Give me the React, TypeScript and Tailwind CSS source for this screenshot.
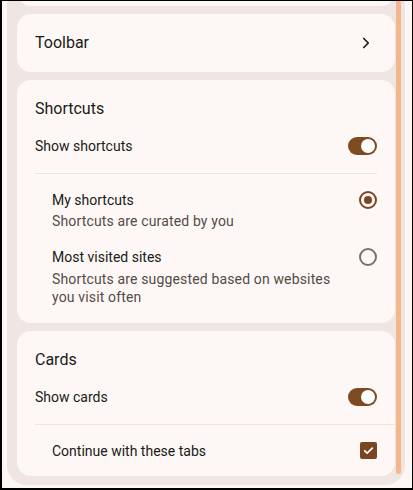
import { ChevronRight } from "lucide-react";

const font = { fontFamily: "Roboto, 'Noto Sans', sans-serif" };

function Toggle() {
    return (
        <div className="relative h-[18px] w-[29px] rounded-full bg-[#7d4a22]">
            <div className="absolute right-[2px] top-[2px] h-[14px] w-[14px] rounded-full bg-white" />
        </div>
    );
}

function Radio({ checked }: { checked: boolean }) {
    if (checked) {
        return (
            <div className="flex h-[18px] w-[18px] items-center justify-center rounded-full border-2 border-[#7b4521]">
                <div className="h-[8px] w-[8px] rounded-full bg-[#7b4521]" />
            </div>
        );
    }
    return <div className="h-[18px] w-[18px] rounded-full border-2 border-[#77706c]" />;
}

function Checkbox() {
    return (
        <div className="flex h-[17px] w-[17px] items-center justify-center rounded-[2px] bg-[#7b4521]">
            <svg width="13" height="13" viewBox="0 0 24 24" fill="none" stroke="white" strokeWidth="3.2" strokeLinecap="round" strokeLinejoin="round">
                <path d="M5 12.5l4.5 4.5L19 7.5" />
            </svg>
        </div>
    );
}

export default function App() {
    return (
        <div
            className="flex h-[490px] w-[413px] flex-col border-t border-l-2 border-r-[1.5px] border-b-2 border-black bg-[#fcf7f4] text-[#201a17]"
            style={font}
        >
            <div className="mb-[3px] ml-[5px] mr-[7.5px] flex flex-1 overflow-hidden rounded-b-[20px] bg-[#efe6e3]">
                {/* cards column, scrolled to the bottom */}
                <div className="flex w-[388px] flex-col justify-end gap-2 overflow-hidden pb-[9px] pl-[10px]">
                    <div className="h-[60px] shrink-0 rounded-[14px] bg-[#fdf8f5]" />

                    <div className="flex h-[58px] shrink-0 items-center justify-between rounded-[14px] bg-[#fdf8f5] pl-[18px] pr-[20px]">
                        <span className="text-[16px] leading-5">Toolbar</span>
                        <ChevronRight size={18} strokeWidth={2.3} className="text-[#201a17]" />
                    </div>

                    <section className="shrink-0 rounded-[14px] bg-[#fdf8f5] pb-[17px]">
                        <h2 className="px-[18px] pt-[19px] text-[16px] font-normal leading-5">Shortcuts</h2>
                        <div className="flex h-[54px] items-center justify-between pl-[18px] pr-[18px]">
                            <span className="text-[14px] leading-5">Show shortcuts</span>
                            <Toggle />
                        </div>
                        <div className="mx-[18px] h-px bg-[#f6e0d4]" />
                        <div className="flex items-start justify-between pl-[35px] pr-[18px] pt-[16px]">
                            <div>
                                <div className="text-[14px] leading-5">My shortcuts</div>
                                <div className="mt-[2px] text-[14px] leading-[18px] tracking-[0.15px] text-[#554a45]">Shortcuts are curated by you</div>
                            </div>
                            <div className="mt-[1px]">
                                <Radio checked />
                            </div>
                        </div>
                        <div className="flex items-start justify-between pl-[35px] pr-[18px] pt-[17px]">
                            <div className="w-[292px]">
                                <div className="text-[14px] leading-5">Most visited sites</div>
                                <div className="mt-[3px] text-[14px] leading-[18px] tracking-[0.15px] text-[#554a45]">
                                    Shortcuts are suggested based on websites you visit often
                                </div>
                            </div>
                            <div className="mt-[1px]">
                                <Radio checked={false} />
                            </div>
                        </div>
                    </section>

                    <section className="shrink-0 rounded-[14px] bg-[#fdf8f5]">
                        <h2 className="px-[18px] pt-[19px] text-[16px] font-normal leading-5">Cards</h2>
                        <div className="flex h-[54px] items-center justify-between pl-[18px] pr-[18px]">
                            <span className="text-[14px] leading-5">Show cards</span>
                            <Toggle />
                        </div>
                        <div className="ml-[18px] h-px bg-[#f6e0d4]" />
                        <div className="flex h-[51px] items-center justify-between pl-[35px] pr-[18px]">
                            <span className="text-[14px] leading-5">Continue with these tabs</span>
                            <Checkbox />
                        </div>
                    </section>
                </div>

                {/* scrollbar */}
                <div className="mb-[11px] ml-px w-[5px] rounded-b-full bg-[#f4b68c]" />
            </div>
        </div>
    );
}
